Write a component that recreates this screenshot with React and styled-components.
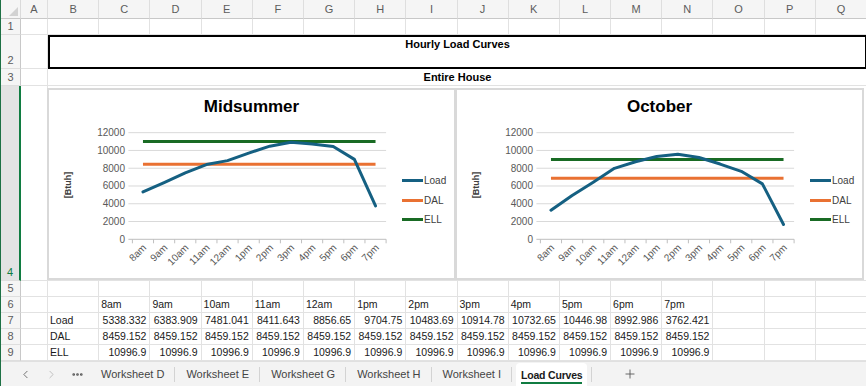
import React from 'react';
import styled, { createGlobalStyle } from 'styled-components';
import { ChevronLeft, ChevronRight, Ellipsis, Plus } from 'lucide-react';

const GlobalStyle = createGlobalStyle`
  * { box-sizing: border-box; }
  html, body { margin: 0; padding: 0; background: #fff; }
  body {
    font-family: 'Liberation Sans', Arial, sans-serif;
    overflow: hidden;
  }
`;

const COLS = 'ABCDEFGHIJKLMNOPQ'.split('');
const HOURS = ['8am', '9am', '10am', '11am', '12am', '1pm', '2pm', '3pm', '4pm', '5pm', '6pm', '7pm'];
const LOAD = ['5338.332', '6383.909', '7481.041', '8411.643', '8856.65', '9704.75', '10483.69', '10914.78', '10732.65', '10446.98', '8992.986', '3762.421'];
const DAL = '8459.152';
const ELL = '10996.9';

const CHARTS = [
  {
    title: 'Midsummer',
    load: LOAD.map(Number),
    dal: Number(DAL),
    ell: Number(ELL),
  },
  {
    title: 'October',
    load: [3269, 4940, 6427, 7987, 8730, 9324, 9584, 9212, 8470, 7652, 6241, 1672],
    dal: 6872,
    ell: 8990,
  },
];

const SERIES = { load: '#156082', dal: '#e97132', ell: '#196b24' };

const Window = styled.div`
  width: 866px;
  height: 386px;
  overflow: hidden;
  display: flex;
  flex-direction: column;
  border-left: 1px solid #1e7145;
`;

const Sheet = styled.div`
  display: grid;
  grid-template-columns: 20px 27px repeat(16, 51.2px);
  grid-template-rows: 19px 16px 34px 17px 195px repeat(5, 16px);
  font-size: 10.5px;
  color: #1a1a1a;
`;

const Corner = styled.div`
  position: relative;
  background: #f5f5f5;
  border-bottom: 1px solid #c8c8c8;
  border-right: 1px solid #dadada;

  &::after {
    content: '';
    position: absolute;
    right: 2px;
    bottom: 2px;
    border-style: solid;
    border-width: 0 0 9px 9px;
    border-color: transparent transparent #d2d2d2 transparent;
  }
`;

const ColHead = styled.div`
  background: #f5f5f5;
  border-bottom: 1px solid #c8c8c8;
  border-right: 1px solid #dedede;
  color: #5c5c5c;
  font-size: 11px;
  display: flex;
  align-items: center;
  justify-content: center;
`;

const RowHead = styled.div`
  background: ${(p) => (p.$selected ? '#e3e3e3' : '#f5f5f5')};
  border-bottom: 1px solid #dedede;
  border-right: ${(p) => (p.$selected ? '2px solid #107c41' : '1px solid #c8c8c8')};
  color: ${(p) => (p.$selected ? '#107c41' : '#5c5c5c')};
  font-size: 11px;
  display: flex;
  align-items: flex-end;
  justify-content: center;
  padding-bottom: 1px;
  line-height: 14px;
`;

const Cell = styled.div`
  border-right: 1px solid #e2e2e2;
  border-bottom: 1px solid #e2e2e2;
  padding: 0 3px 0 2px;
  display: flex;
  align-items: flex-end;
  justify-content: ${(p) => (p.$right ? 'flex-end' : 'flex-start')};
  white-space: nowrap;
  overflow: hidden;
  line-height: 15px;
`;

const Banner = styled.div`
  grid-column: span 16;
  border: 2px solid #000;
  font-weight: bold;
  font-size: 11px;
  text-align: center;
  padding-top: 1px;
  color: #000;
`;

const SubBanner = styled.div`
  grid-column: span 16;
  border-bottom: 1px solid #e2e2e2;
  font-weight: bold;
  font-size: 11px;
  display: flex;
  align-items: center;
  justify-content: center;
  color: #000;
`;

const ChartRow = styled.div`
  grid-column: span 16;
  border-bottom: 1px solid #e2e2e2;
  display: flex;
  align-items: flex-start;
  padding-top: 2px;
  margin-left: -1px;
`;

const ChartFrame = styled.div`
  width: 409px;
  height: 192px;
  flex: none;
  border: 2px solid #d9d9d9;
  background: #fff;
  display: flex;
  flex-direction: column;

  & + & {
    margin-left: -1px;
  }
`;

const ChartTitle = styled.div`
  height: 34px;
  line-height: 34px;
  text-align: center;
  font-size: 17px;
  font-weight: bold;
  color: #000;
`;

const ChartBody = styled.div`
  display: flex;
  flex: 1;
`;

const Legend = styled.div`
  display: flex;
  flex-direction: column;
  padding: 47px 0 0 3px;
`;

const LegendItem = styled.div`
  display: flex;
  align-items: center;
  height: 19.6px;
  font-size: 10px;
  color: #404040;
`;

const Swatch = styled.span`
  width: 21px;
  height: 3px;
  background: ${(p) => p.$color};
  margin-right: 1px;
`;

const TabBar = styled.div`
  flex: 1;
  background: #f3f3f3;
  border-top: 1px solid #e0e0e0;
  display: flex;
  align-items: center;
  font-size: 11px;
  color: #444;
`;

const NavGroup = styled.div`
  display: flex;
  align-items: center;
  gap: 6px;
  padding-left: 14px;
  margin-right: 3px;
`;

const NavButton = styled.span`
  width: 20px;
  display: flex;
  justify-content: center;
  color: ${(p) => (p.$disabled ? '#b4b4b4' : '#555')};
`;

const Tab = styled.span`
  padding: 0 10px 0 11px;
  line-height: 15px;
  white-space: nowrap;
`;

const ActiveTab = styled.span`
  align-self: flex-end;
  height: 23px;
  margin: 0 4px;
  padding: 0 5px;
  background: #fff;
  border-radius: 4px 4px 0 0;
  display: flex;
  align-items: center;
  font-weight: bold;
  font-size: 10.5px;
  letter-spacing: -0.2px;
  color: #1a1a1a;
`;

const ActiveLabel = styled.span`
  border-bottom: 2px solid #107c41;
  line-height: 14px;
  padding-top: 2px;
  white-space: nowrap;
`;

const Divider = styled.span`
  width: 1px;
  height: 15px;
  background: #d3d3d3;
`;

const AddButton = styled.span`
  margin-left: 31px;
  display: flex;
  color: #555;
`;

// plot geometry, in svg units
const P_LEFT = 83.4;
const P_RIGHT = 337.1;
const BASE = 115.3;
const STEP = 17.77;
const CAT = (P_RIGHT - P_LEFT) / 12;
const yOf = (v) => BASE - (v / 2000) * STEP;
const xOf = (i) => P_LEFT + (i + 0.5) * CAT;

const Plot = ({ data }) => {
  const loadPts = data.load.map((v, i) => `${xOf(i)},${yOf(v)}`).join(' ');
  return (
    <svg width="350" height="154" style={{ display: 'block', flex: 'none' }}>
      {[1, 2, 3, 4, 5, 6].map((k) => (
        <line key={k} x1={P_LEFT - 4} x2={P_RIGHT} y1={yOf(k * 2000)} y2={yOf(k * 2000)} stroke="#d9d9d9" strokeWidth="1" />
      ))}
      <line x1={P_LEFT - 4} x2={P_RIGHT} y1={BASE} y2={BASE} stroke="#bfbfbf" strokeWidth="1" />
      {Array.from({ length: 13 }, (_, i) => (
        <line key={i} x1={P_LEFT + i * CAT} x2={P_LEFT + i * CAT} y1={BASE} y2={BASE + 4} stroke="#bfbfbf" strokeWidth="1" />
      ))}
      {[0, 1, 2, 3, 4, 5, 6].map((k) => (
        <text key={k} x="76" y={yOf(k * 2000) + 3.5} textAnchor="end" fontSize="10" fill="#595959" fontFamily="Liberation Sans, Arial, sans-serif">
          {k * 2000}
        </text>
      ))}
      {HOURS.map((h, i) => (
        <text
          key={h}
          x={xOf(i) + 4}
          y={BASE + 9}
          textAnchor="end"
          fontSize="10"
          fill="#595959"
          fontFamily="Liberation Sans, Arial, sans-serif"
          transform={`rotate(-45 ${xOf(i) + 4} ${BASE + 9})`}
        >
          {h}
        </text>
      ))}
      <text
        x="22"
        y="61"
        textAnchor="middle"
        fontSize="9"
        fontWeight="bold"
        fill="#404040"
        fontFamily="Liberation Sans, Arial, sans-serif"
        transform="rotate(-90 22 61)"
      >
        [Btuh]
      </text>
      <line x1={xOf(0)} x2={xOf(11)} y1={yOf(data.ell)} y2={yOf(data.ell)} stroke={SERIES.ell} strokeWidth="3" />
      <line x1={xOf(0)} x2={xOf(11)} y1={yOf(data.dal)} y2={yOf(data.dal)} stroke={SERIES.dal} strokeWidth="3" />
      <polyline points={loadPts} fill="none" stroke={SERIES.load} strokeWidth="3" strokeLinejoin="round" strokeLinecap="round" />
    </svg>
  );
};

const Chart = ({ data }) => (
  <ChartFrame>
    <ChartTitle>{data.title}</ChartTitle>
    <ChartBody>
      <Plot data={data} />
      <Legend>
        <LegendItem>
          <Swatch $color={SERIES.load} />
          Load
        </LegendItem>
        <LegendItem>
          <Swatch $color={SERIES.dal} />
          DAL
        </LegendItem>
        <LegendItem>
          <Swatch $color={SERIES.ell} />
          ELL
        </LegendItem>
      </Legend>
    </ChartBody>
  </ChartFrame>
);

const emptyCells = (n, prefix) => Array.from({ length: n }, (_, i) => <Cell key={`${prefix}-${i}`} />);

const DataRow = ({ num, label, values }) => (
  <>
    <RowHead>{num}</RowHead>
    <Cell />
    <Cell>{label}</Cell>
    {values.map((v, i) => (
      <Cell key={i} $right>
        {v}
      </Cell>
    ))}
    {emptyCells(3, `r${num}`)}
  </>
);

const TABS = ['Worksheet D', 'Worksheet E', 'Worksheet G', 'Worksheet H', 'Worksheet I'];

export default function App() {
  return (
    <>
      <GlobalStyle />
      <Window>
        <Sheet>
          <Corner />
          {COLS.map((c) => (
            <ColHead key={c}>{c}</ColHead>
          ))}

          <RowHead>1</RowHead>
          {emptyCells(17, 'r1')}

          <RowHead>2</RowHead>
          <Cell />
          <Banner>Hourly Load Curves</Banner>

          <RowHead>3</RowHead>
          <Cell />
          <SubBanner>Entire House</SubBanner>

          <RowHead $selected>4</RowHead>
          <Cell />
          <ChartRow>
            {CHARTS.map((c) => (
              <Chart key={c.title} data={c} />
            ))}
          </ChartRow>

          <RowHead>5</RowHead>
          {emptyCells(17, 'r5')}

          <RowHead>6</RowHead>
          <Cell />
          <Cell />
          {HOURS.map((h) => (
            <Cell key={h}>{h}</Cell>
          ))}
          {emptyCells(3, 'r6')}

          <DataRow num={7} label="Load" values={LOAD} />
          <DataRow num={8} label="DAL" values={HOURS.map(() => DAL)} />
          <DataRow num={9} label="ELL" values={HOURS.map(() => ELL)} />
        </Sheet>

        <TabBar>
          <NavGroup>
            <NavButton>
              <ChevronLeft size={13} strokeWidth={1.5} />
            </NavButton>
            <NavButton $disabled>
              <ChevronRight size={13} strokeWidth={1.5} />
            </NavButton>
            <NavButton>
              <Ellipsis size={13} strokeWidth={3} />
            </NavButton>
          </NavGroup>
          {TABS.map((t) => (
            <React.Fragment key={t}>
              <Tab>{t}</Tab>
              <Divider />
            </React.Fragment>
          ))}
          <ActiveTab>
            <ActiveLabel>Load Curves</ActiveLabel>
          </ActiveTab>
          <Divider />
          <AddButton>
            <Plus size={14} strokeWidth={1.5} />
          </AddButton>
        </TabBar>
      </Window>
    </>
  );
}
